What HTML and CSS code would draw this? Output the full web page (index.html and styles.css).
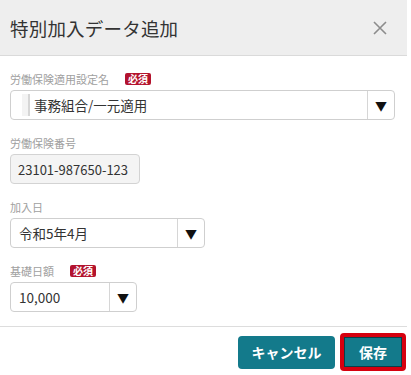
FILE: index.html
```html
<!DOCTYPE html>
<html>
<head>
<meta charset="utf-8">
<link rel="stylesheet" href="styles.css">
</head>
<body>

<div class="dialog">

  <!-- Header -->
  <div class="dlg-header">
    <div class="dlg-title">特別加入データ追加</div>
    <div class="dlg-close">
      <svg width="14" height="14" viewBox="0 0 14 14">
        <path d="M1 1 L13 13 M13 1 L1 13" stroke="#8c8c8c" stroke-width="1.6" fill="none"/>
      </svg>
    </div>
  </div>

  <!-- Form body -->
  <div class="dlg-body">

    <div class="field">
      <div class="field-label">労働保険適用設定名 <span class="badge">必須</span></div>
      <div class="select sel-wide">
        <div class="select-value"><span class="tag-bar"></span>事務組合/一元適用</div>
        <div class="select-arrow">&#9660;</div>
      </div>
    </div>

    <div class="field">
      <div class="field-label">労働保険番号</div>
      <div class="readonly">23101-987650-123</div>
    </div>

    <div class="field">
      <div class="field-label">加入日</div>
      <div class="select sel-mid">
        <div class="select-value">令和5年4月</div>
        <div class="select-arrow">&#9660;</div>
      </div>
    </div>

    <div class="field">
      <div class="field-label">基礎日額 <span class="badge">必須</span></div>
      <div class="select sel-small">
        <div class="select-value">10,000</div>
        <div class="select-arrow">&#9660;</div>
      </div>
    </div>

  </div>

  <!-- Footer buttons -->
  <div class="dlg-footer">
    <button class="btn btn-cancel">キャンセル</button>
    <button class="btn btn-save">保存</button>
  </div>

</div>

</body>
</html>
```

FILE: styles.css
```css
body {
  margin: 0;
  background: #fff;
  font-family: "Noto Sans CJK JP", "Noto Sans", sans-serif;
  color: #333;
}

.dialog {
  width: 407px;
  background: #fff;
}

/* header */
.dlg-header {
  height: 55px;
  background: #eeeeee;
  border-bottom: 1px solid #dadada;
  display: flex;
  align-items: center;
  justify-content: space-between;
  padding: 0 20px 0 10px;
}

.dlg-title {
  font-size: 18.5px;
  color: #333;
  letter-spacing: 0.2px;
}

.dlg-close {
  display: flex;
  align-items: center;
  padding-top: 1px;
}

/* body */
.dlg-body {
  padding: 15px 10px 14px 10px;
  border-bottom: 1px solid #dddddd;
}

.field + .field {
  margin-top: 15px;
}

.field-label {
  font-size: 11px;
  line-height: 16px;
  height: 16px;
  color: #a0a0a0;
  margin-bottom: 3px;
  display: flex;
  align-items: center;
}

.badge {
  display: inline-block;
  margin-left: 16px;
  background: #b3132e;
  color: #fff;
  font-size: 10px;
  font-weight: bold;
  line-height: 12px;
  padding: 0 3px;
  border-radius: 2px;
}

.select {
  height: 30px;
  border: 1px solid #cfcfcf;
  border-radius: 4px;
  display: flex;
  box-sizing: border-box;
  background: #fff;
}

.sel-wide { width: 385px; }
.sel-mid { width: 195px; }
.sel-small { width: 127px; }

.select-value {
  flex: 1;
  display: flex;
  align-items: center;
  padding-left: 8px;
  font-size: 13.5px;
  color: #333;
}

.tag-bar {
  display: inline-block;
  width: 6px;
  height: 22px;
  background: #f3f3f3;
  border-right: 2px solid #d6d6d6;
  margin: 0 4px 0 3px;
}

.select-arrow {
  width: 26px;
  border-left: 1px solid #d6d6d6;
  display: flex;
  align-items: center;
  justify-content: center;
  font-size: 12px;
  color: #111;
}

.readonly {
  width: 130px;
  height: 30px;
  box-sizing: border-box;
  border: 1px solid #d3d3d3;
  border-radius: 4px;
  background: #f4f4f4;
  display: flex;
  align-items: center;
  padding-left: 7px;
  font-size: 13px;
  color: #333;
}

/* footer */
.dlg-footer {
  display: flex;
  justify-content: flex-end;
  align-items: center;
  gap: 5px;
  padding: 6px 1px 0 0;
  height: 38px;
}

.btn {
  font-family: "Noto Sans CJK JP", "Noto Sans", sans-serif;
  font-weight: bold;
  font-size: 14px;
  color: #fff;
  background: #137a8b;
  border: none;
  border-radius: 4px;
  cursor: pointer;
}

.btn-cancel {
  width: 97px;
  height: 33px;
}

.btn-save {
  width: 66px;
  height: 38px;
  border: 4px solid #d6000f;
  box-shadow: inset 0 0 0 1px #0b3f4a;
}
```
